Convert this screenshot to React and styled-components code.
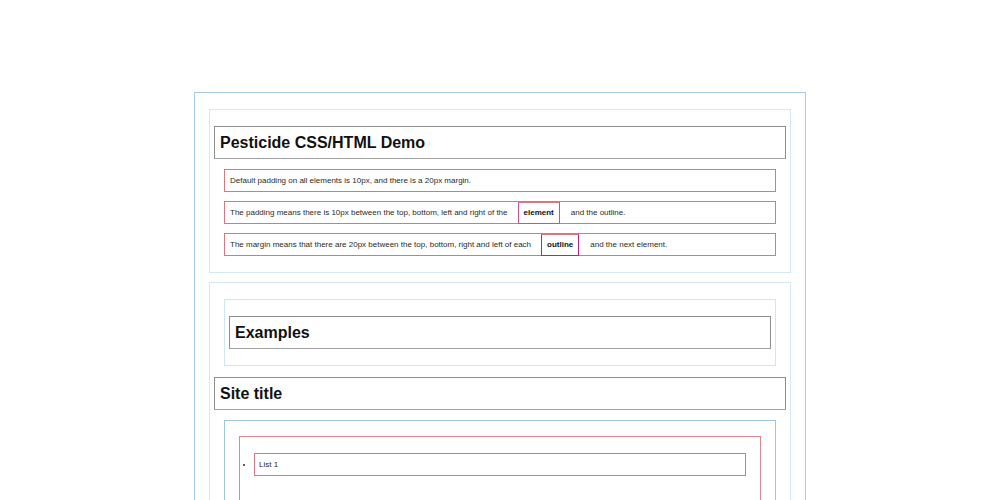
import { createGlobalStyle, styled } from "styled-components";

const Global = createGlobalStyle`
  html, body {
    margin: 0;
    padding: 0;
    background: #fff;
  }
  body {
    font-family: "Liberation Sans", Arial, sans-serif;
    color: #222;
  }
  * {
    box-sizing: border-box;
  }
`;

export default function App() {
  return (
    <>
      <Global />
      <Page>
        <Section $mt={11}>
          <Title>Pesticide CSS/HTML Demo</Title>
          <Para>Default padding on all elements is 10px, and there is a 20px margin.</Para>
          <Para>
            The padding means there is 10px between the top, bottom, left and right of the
            <Strong>element</Strong>
            and the outline.
          </Para>
          <Para $last>
            The margin means that there are 20px between the top, bottom, right and left of each
            <Strong $deep>outline</Strong>
            and the next element.
          </Para>
        </Section>

        <Section $mt={9}>
          <HeaderBox>
            <Title>Examples</Title>
          </HeaderBox>
          <Title>Site title</Title>
          <Nav>
            <List>
              <Item>List 1</Item>
            </List>
          </Nav>
        </Section>
      </Page>
    </>
  );
}

const Page = styled.div`
  width: 612px;
  margin: 92px auto 0;
  border: 1px solid #a7cbe5;
  padding: 5px 4px;
`;

const Section = styled.section`
  margin: ${(p) => p.$mt}px 10px 0;
  border: 1px solid #d3e9f3;
  padding: 5px 4px 6px;
`;

const Title = styled.h1`
  margin: 11px 0 10px;
  border: 1px solid #8d8d8d;
  border-bottom-color: #a3a3a3;
  padding: 5px 5px;
  font-size: 16px;
  line-height: 21px;
  font-weight: bold;
  color: #111;
`;

const Para = styled.p`
  margin: 9px 10px ${(p) => (p.$last ? "10px" : "9px")};
  border: 1px solid #e0737f;
  padding: 5px 5px;
  font-size: 8px;
  line-height: 11px;
  color: #2a2a2a;
`;

const Strong = styled.strong`
  margin: 0 11px 0 10px;
  border: 1px solid ${(p) => (p.$deep ? "#c91c78" : "#d94a8c")};
  border-top-color: #e0737f;
  padding: 5px 5px 6px;
  font-weight: bold;
  color: #111;
`;

const HeaderBox = styled.div`
  margin: 11px 10px 0;
  border: 1px solid #cfe7f3;
  padding: 5px 4px 6px;
`;

const Nav = styled.nav`
  margin: 10px 10px 0;
  border: 1px solid #9ec7e1;
  padding: 5px 4px;
`;

const List = styled.ul`
  margin: 10px 10px 0;
  border: 1px solid #e3848e;
  padding: 5px 4px;
  min-height: 140px;
  list-style: disc;
`;

const Item = styled.li`
  margin: 11px 10px;
  border: 1px solid #e07382;
  padding: 6px 4px 5px;
  font-size: 8px;
  line-height: 10px;
  color: #2a2a2a;
  &::marker {
    font-size: 8px;
  }
`;
